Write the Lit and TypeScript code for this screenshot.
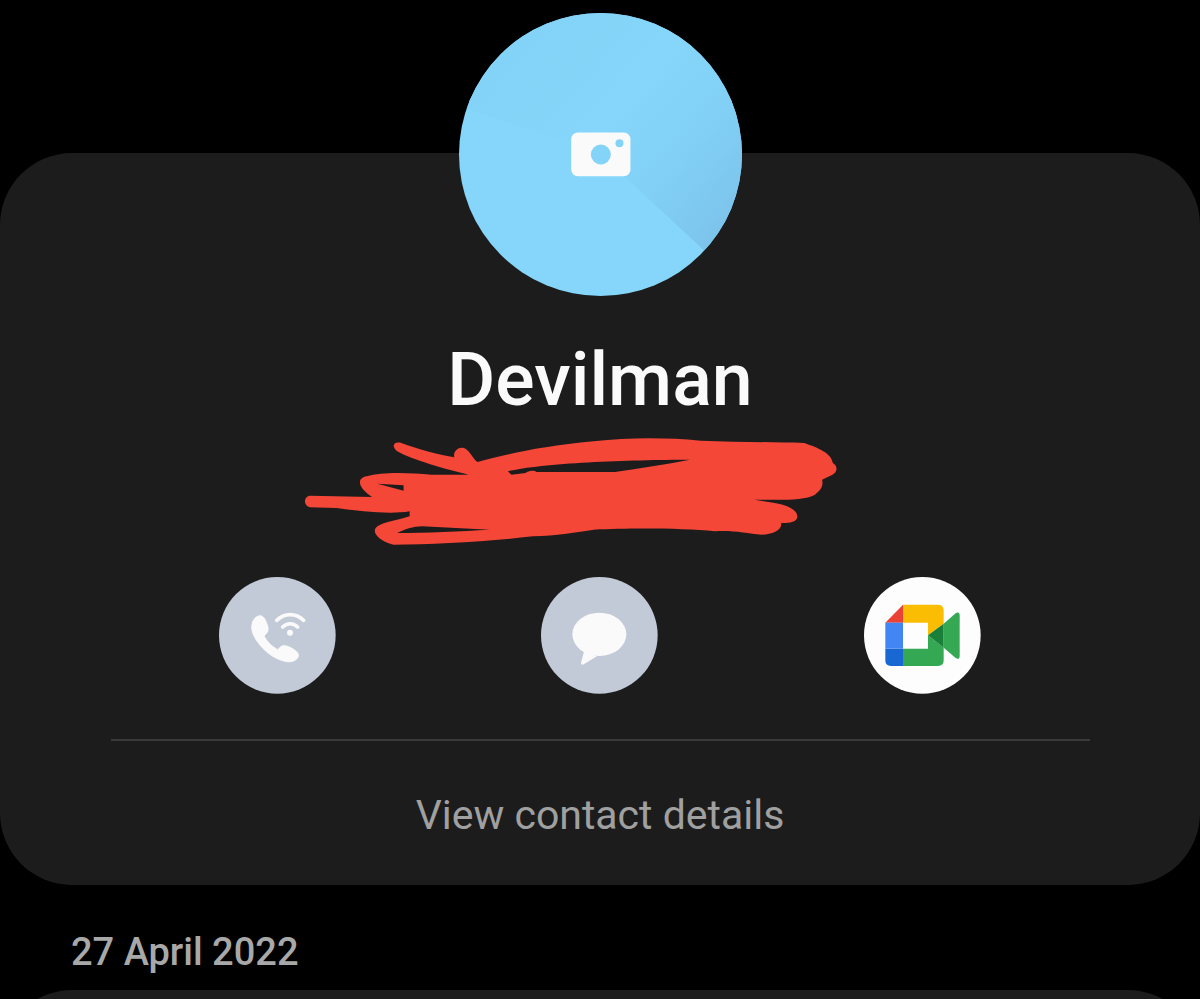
import { LitElement, html, css, svg } from 'lit';
import { customElement } from 'lit/decorators.js';

// scribble over the redacted number, traced at 2.8x wide and 3x tall
const SCRIBBLE = 'M55 203 L230 207 C190 180 185 150 215 145 C260 130 340 135 395 140 L500 140 C440 125 340 95 300 70 C280 50 295 40 310 44 C360 65 420 80 460 88 C455 65 480 50 495 65 C510 80 515 95 525 102 C600 80 700 55 850 40 C950 28 1050 28 1150 38 C1250 42 1350 42 1440 45 C1480 60 1515 75 1520 105 C1535 115 1535 135 1510 145 L1490 155 C1495 180 1480 190 1470 200 C1440 218 1380 215 1300 215 L1340 222 C1400 230 1425 250 1420 270 C1415 285 1390 285 1375 285 C1380 305 1350 320 1320 320 C1280 315 1230 305 1190 310 C1100 300 950 300 850 305 C790 315 750 322 680 325 C560 340 400 350 290 350 C250 340 230 315 240 300 C250 285 290 280 335 265 L335 250 C280 260 200 250 130 240 L55 238 C35 230 40 205 55 203 Z ' +
  'M610 130 C700 105 950 95 1120 95 C1050 110 980 120 910 132 L690 132 C680 125 665 130 660 135 L620 140 Z ' +
  'M245 167 L318 172 L318 188 Z ' +
  'M300 315 C320 305 345 295 370 295 L560 305 C480 310 380 315 300 315 Z';

@customElement('app-root')
export class AppRoot extends LitElement {
  static styles = css`
    :host {
      display: block;
      height: 999px;
      overflow: hidden;
      background: #000;
      font-family: Roboto, 'Liberation Sans', sans-serif;
    }
    .card {
      margin-top: 153px;
      height: 732px;
      box-sizing: border-box;
      background: #1c1c1c;
      border-radius: 72px;
      display: flex;
      flex-direction: column;
      align-items: center;
    }
    .avatar {
      display: block;
      width: 283px;
      height: 283px;
      margin-top: -140px;
    }
    .name {
      margin-top: 39px;
      font-size: 73.5px;
      line-height: 90px;
      font-weight: 500;
      color: #fafafa;
    }
    .scribble {
      display: block;
      width: 560px;
      height: 130px;
      margin: 3px 0 0 -60px;
    }
    .actions {
      width: 762px;
      margin-top: 19px;
      display: flex;
      justify-content: space-between;
    }
    .action {
      display: block;
      width: 117px;
      height: 117px;
    }
    .action:nth-child(2) {
      margin-right: 1px;
    }
    .divider {
      width: 979px;
      height: 2px;
      margin-top: 45px;
      background: #3a3a3a;
    }
    .details {
      margin-top: 49px;
      font-size: 41px;
      line-height: 50px;
      color: #a0a0a0;
    }
    .date {
      margin: 45px 0 0 71px;
      font-size: 38px;
      line-height: 44px;
      font-weight: 500;
      color: #a8a8a8;
    }
    .next {
      margin-top: 16px;
      height: 200px;
      background: #1c1c1c;
      border-radius: 72px;
    }
  `;

  renderAvatar() {
    return html`<svg class="avatar" viewBox="55 38 850 850">
      <defs>
        <clipPath id="round"><circle cx="480" cy="463" r="425"></circle></clipPath>
        <linearGradient id="shade" gradientUnits="userSpaceOnUse" x1="180" y1="120" x2="860" y2="720">
          <stop offset="0" stop-color="#83d2f7"></stop>
          <stop offset="0.45" stop-color="#85d6fa"></stop>
          <stop offset="0.72" stop-color="#81cff5"></stop>
          <stop offset="1" stop-color="#7cc2eb"></stop>
        </linearGradient>
      </defs>
      <g clip-path="url(#round)">
        <rect x="0" y="0" width="960" height="930" fill="#85d6fa"></rect>
        <polygon points="0,300 480,463 790,750 960,750 960,0 0,0" fill="url(#shade)"></polygon>
      </g>
      <rect x="392" y="397" width="178" height="131" rx="20" fill="#fafafa"></rect>
      <circle cx="481" cy="463" r="30" fill="#84d3f8"></circle>
      <circle cx="537" cy="429" r="12" fill="#84d3f8"></circle>
    </svg>`;
  }

  renderCall() {
    return html`<svg class="action" viewBox="28 20 351 351">
      <circle cx="203" cy="195" r="175" fill="#c2cad8"></circle>
      <path fill="#fafafa" stroke="#fafafa" stroke-width="3" stroke-linejoin="round" d="M128 158 C132 143 145 134 155 137 C163 139 168 150 172 162 C176 172 177 180 172 187 L163 197 C170 212 188 230 204 238 L215 228 C222 224 232 226 245 233 C258 240 268 248 266 258 C262 270 248 276 232 274 C190 268 150 232 132 195 C126 182 125 170 128 158 Z"></path>
      <path fill="none" stroke="#fafafa" stroke-width="11" stroke-linecap="round" d="M201 150 C225 127 258 127 282 150"></path>
      <path fill="none" stroke="#fafafa" stroke-width="11" stroke-linecap="round" d="M219 170 C232 157 251 157 264 170"></path>
      <circle cx="241" cy="187" r="9" fill="#fafafa"></circle>
    </svg>`;
  }

  renderMessage() {
    return html`<svg class="action" viewBox="28 20 351 351">
      <circle cx="203" cy="195" r="175" fill="#c2cad8"></circle>
      <ellipse cx="203" cy="192" rx="81" ry="65" fill="#fafafa"></ellipse>
      <path fill="#fafafa" d="M158 240 L148 278 C148 283 152 284 156 282 L196 258 Z"></path>
    </svg>`;
  }

  renderMeet() {
    return html`<svg class="action" viewBox="28 20 351 351">
      <circle cx="203" cy="195" r="175" fill="#fdfdfd"></circle>
      ${svg`
        <path fill="#fbbc04" d="M145 103 H250 Q267 103 267 120 V160 L220 195 V157 H145 Z"></path>
        <path fill="#ea4335" d="M145 103 L92 157 H145 Z"></path>
        <rect x="92" y="157" width="53" height="78" fill="#4285f4"></rect>
        <path fill="#1967d2" d="M92 235 H145 V287 H109 Q92 287 92 270 Z"></path>
        <path fill="#34a853" d="M145 235 H220 V195 L267 232 V270 Q267 287 250 287 H145 Z"></path>
        <path fill="#188038" d="M220 195 L267 160 V232 Z"></path>
        <path fill="#34a853" d="M267 160 L303 129 Q315 122 315 136 V256 Q315 270 303 263 L267 232 Z"></path>
      `}
    </svg>`;
  }

  render() {
    return html`
      <section class="card">
        ${this.renderAvatar()}
        <div class="name">Devilman</div>
        <svg class="scribble" viewBox="0 0 1568 390" preserveAspectRatio="none">
          <path fill="#f54738" fill-rule="evenodd" d="${SCRIBBLE}"></path>
        </svg>
        <div class="actions">
          ${this.renderCall()} ${this.renderMessage()} ${this.renderMeet()}
        </div>
        <div class="divider"></div>
        <div class="details">View contact details</div>
      </section>
      <div class="date">27 April 2022</div>
      <div class="next"></div>
    `;
  }
}
